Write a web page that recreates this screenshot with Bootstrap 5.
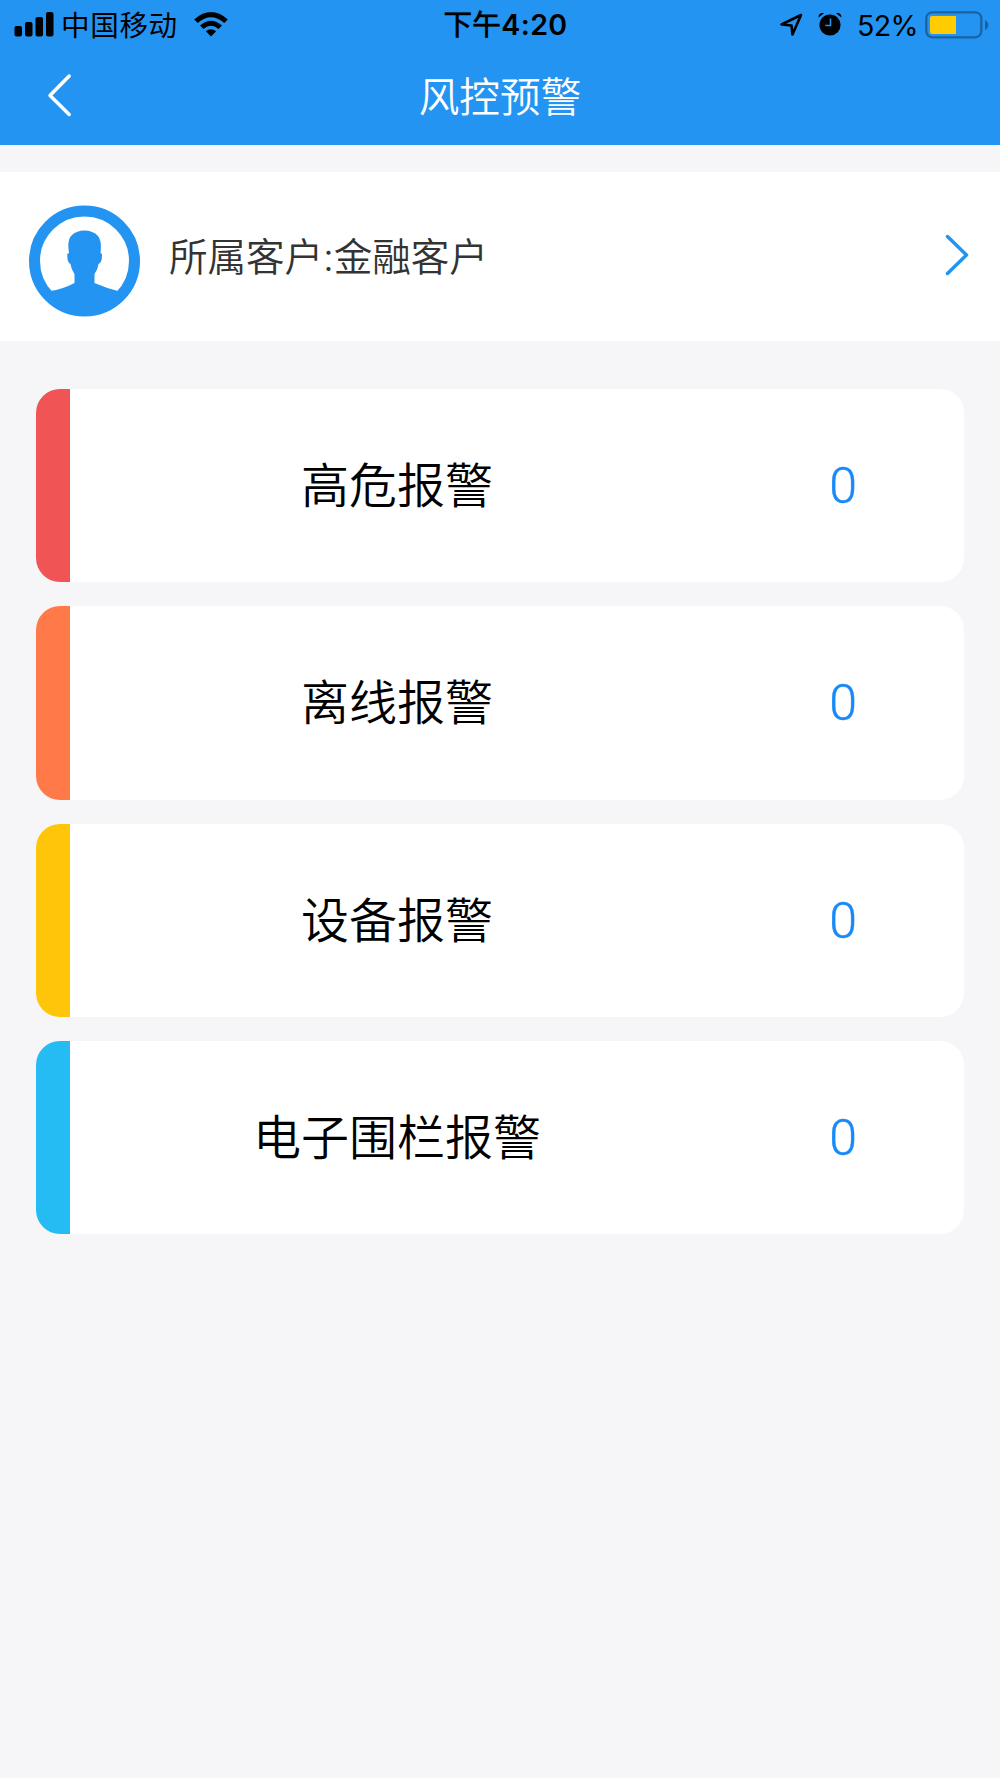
<!DOCTYPE html>
<html lang="zh-CN">
<head>
<meta charset="utf-8">
<meta name="viewport" content="width=device-width, initial-scale=1">
<title>风控预警</title>
<link href="https://cdn.jsdelivr.net/npm/bootstrap@5.3.0/dist/css/bootstrap.min.css" rel="stylesheet">
<style>
  body { background: #f6f6f9; font-family: Inter, "Noto Sans CJK SC", sans-serif; color: #000; min-height: 1778px; }
  svg { display: block; flex: none; }
  .app-header { background: #2494f2; height: 145px; }
  .status-bar { height: 49px; padding: 0 11px 0 14px; font-size: 28.6px; line-height: 49px; display: grid; grid-template-columns: 1fr auto 1fr; }
  .carrier { margin-left: 7px; letter-spacing: .6px; padding-top: 1px; }
  .wifi { margin-left: 15px; margin-top: -1px; }
  .clock { font-weight: 600; letter-spacing: .35px; padding: 0 0 0 8px; }
  .meridiem { font-weight: 400; -webkit-text-stroke: .7px #000; }
  .alarm-icon { margin-left: 15px; margin-top: -3px; }
  .locate { margin-top: -1px; }
  .percent { margin-left: 15px; letter-spacing: -.6px; padding-top: 1px; }
  .battery { margin-left: 7px; margin-top: -1px; }
  .title-bar { height: 96px; display: grid; grid-template-columns: 1fr auto 1fr; padding: 0 47px; }
  .title-bar h1 { font-size: 40.67px; line-height: 96px; font-weight: 350; padding-top: 1px; }
  .back { margin-top: -6px; }
  .customer { height: 169px; margin-top: 27px; padding: 0 31px 0 29px; }
  .customer-name { font-size: 38.67px; line-height: 56px; color: #333; margin-left: 29px; font-weight: 350; letter-spacing: -.15px; }
  .forward { margin-top: -3px; }
  .alarms { padding: 48px 36px 0; gap: 24px; }
  .alarm { height: 193.33px; border-radius: 24px; font-size: 48px; line-height: 72px; font-weight: 350; }
  .stripe { width: 34px; }
  .alarm-name { width: 654px; padding-top: 1px; }
  .alarm-count { width: 238px; padding-top: 1px; color: #1789f8; font-family: Roboto, Inter, sans-serif; font-size: 50px; font-weight: 300; -webkit-text-stroke: .4px #1789f8; }
  .red { background: #f05455; }
  .orange { background: #ff7a48; }
  .yellow { background: #ffc508; }
  .cyan { background: #25bcf3; }
</style>
<script src="https://cdn.jsdelivr.net/npm/bootstrap@5.3.0/dist/js/bootstrap.bundle.min.js"></script>
</head>
<body>
<header class="app-header">
  <div class="status-bar">
    <div class="d-flex align-items-center">
      <svg width="40" height="26" viewBox="0 0 40 26">
        <rect x=".5" y="14" width="7.5" height="10.5" rx="2"/><rect x="11" y="10" width="7.5" height="14.5" rx="2"/><rect x="21.5" y="5" width="7.5" height="19.5" rx="2"/><rect x="32" y="0" width="7.5" height="24.5" rx="2"/>
      </svg>
      <span class="carrier">中国移动</span>
      <svg class="wifi" width="36" height="26" viewBox="0 0 36 26">
        <path d="M1.2 7.4Q18-7.400 34.800 7.400L31.300 10.900Q18-.4 4.700 10.900ZM7 13.500Q18 3.900 29 13.500L25.500 17Q18 10.500 10.500 17ZM12.800 19.300Q18 15 23.200 19.300L18 24.500Z"/>
      </svg>
    </div>
    <div class="clock"><span class="meridiem">下午</span>4:20</div>
    <div class="d-flex align-items-center justify-content-end">
      <svg class="locate" width="23" height="24" viewBox="0 0 23 24"><path d="M1.500 11.500 21 2 12.500 21.500 11.500 12.500Z" fill="none" stroke="#000" stroke-width="2.600" stroke-linejoin="round"/></svg>
      <svg class="alarm-icon" width="24" height="24" viewBox="0 0 24 24">
        <circle cx="12" cy="13" r="10.600"/><path d="M.7 5.500C0 2.500 3 .2 6 1.200ZM23.300 5.500C24 2.500 21 .2 18 1.200Z"/><path d="M12.500 6.500V13.500H7.300" fill="none" stroke="#2494f2" stroke-width="1.600"/>
      </svg>
      <span class="percent">52%</span>
      <svg class="battery" width="64" height="28" viewBox="0 0 64 28">
        <rect x="1.300" y="1.300" width="55" height="25" rx="6" fill="none" stroke="#1a63a3" stroke-width="2.300"/>
        <path d="M5 7Q5 5 7 5H31V23H7Q5 23 5 21Z" fill="#fc0"/><path d="M60 9Q63.300 10.500 63.300 14T60 19Z" fill="#1a63a3"/>
      </svg>
    </div>
  </div>
  <div class="title-bar align-items-center">
    <svg class="back" width="26" height="44" viewBox="0 0 26 44"><path d="M22.200 3 3 22.500 22.200 41.500" fill="none" stroke="#fff" stroke-width="3.500" stroke-linecap="round" stroke-linejoin="round"/></svg>
    <h1 class="m-0 text-white">风控预警</h1>
  </div>
</header>
<main>
  <section class="customer bg-white d-flex align-items-center">
    <svg class="mt-2" width="111" height="112" viewBox="0 0 111 112">
      <circle cx="55.500" cy="56" r="50" fill="none" stroke="#2494f2" stroke-width="11"/>
      <path d="M22 86 Q34 84 45.500 78V69Q42 64 41.500 59Q38 58 38.300 49L40 48Q38 36 42 31Q47 25.500 55.500 25.500T69 31Q73 36 71.500 48L73 49Q73.300 58 69.500 59Q69 64 65.500 69V78Q77 83 89 86L93 92Q78 108 55.500 108T18 92Z" fill="#2494f2"/>
    </svg>
    <span class="customer-name">所属客户:金融客户</span>
    <svg class="forward ms-auto" width="24" height="42" viewBox="0 0 24 42"><path d="M2.500 2.500 21.500 21 2.500 39.500" fill="none" stroke="#2494f2" stroke-width="3.500" stroke-linecap="round" stroke-linejoin="round"/></svg>
  </section>
  <section class="alarms d-flex flex-column">
    <div class="alarm bg-white d-flex align-items-center overflow-hidden"><div class="stripe red h-100"></div><div class="alarm-name text-center">高危报警</div><div class="alarm-count text-center">0</div></div>
    <div class="alarm bg-white d-flex align-items-center overflow-hidden"><div class="stripe orange h-100"></div><div class="alarm-name text-center">离线报警</div><div class="alarm-count text-center">0</div></div>
    <div class="alarm bg-white d-flex align-items-center overflow-hidden"><div class="stripe yellow h-100"></div><div class="alarm-name text-center">设备报警</div><div class="alarm-count text-center">0</div></div>
    <div class="alarm bg-white d-flex align-items-center overflow-hidden"><div class="stripe cyan h-100"></div><div class="alarm-name text-center">电子围栏报警</div><div class="alarm-count text-center">0</div></div>
  </section>
</main>
</body>
</html>
